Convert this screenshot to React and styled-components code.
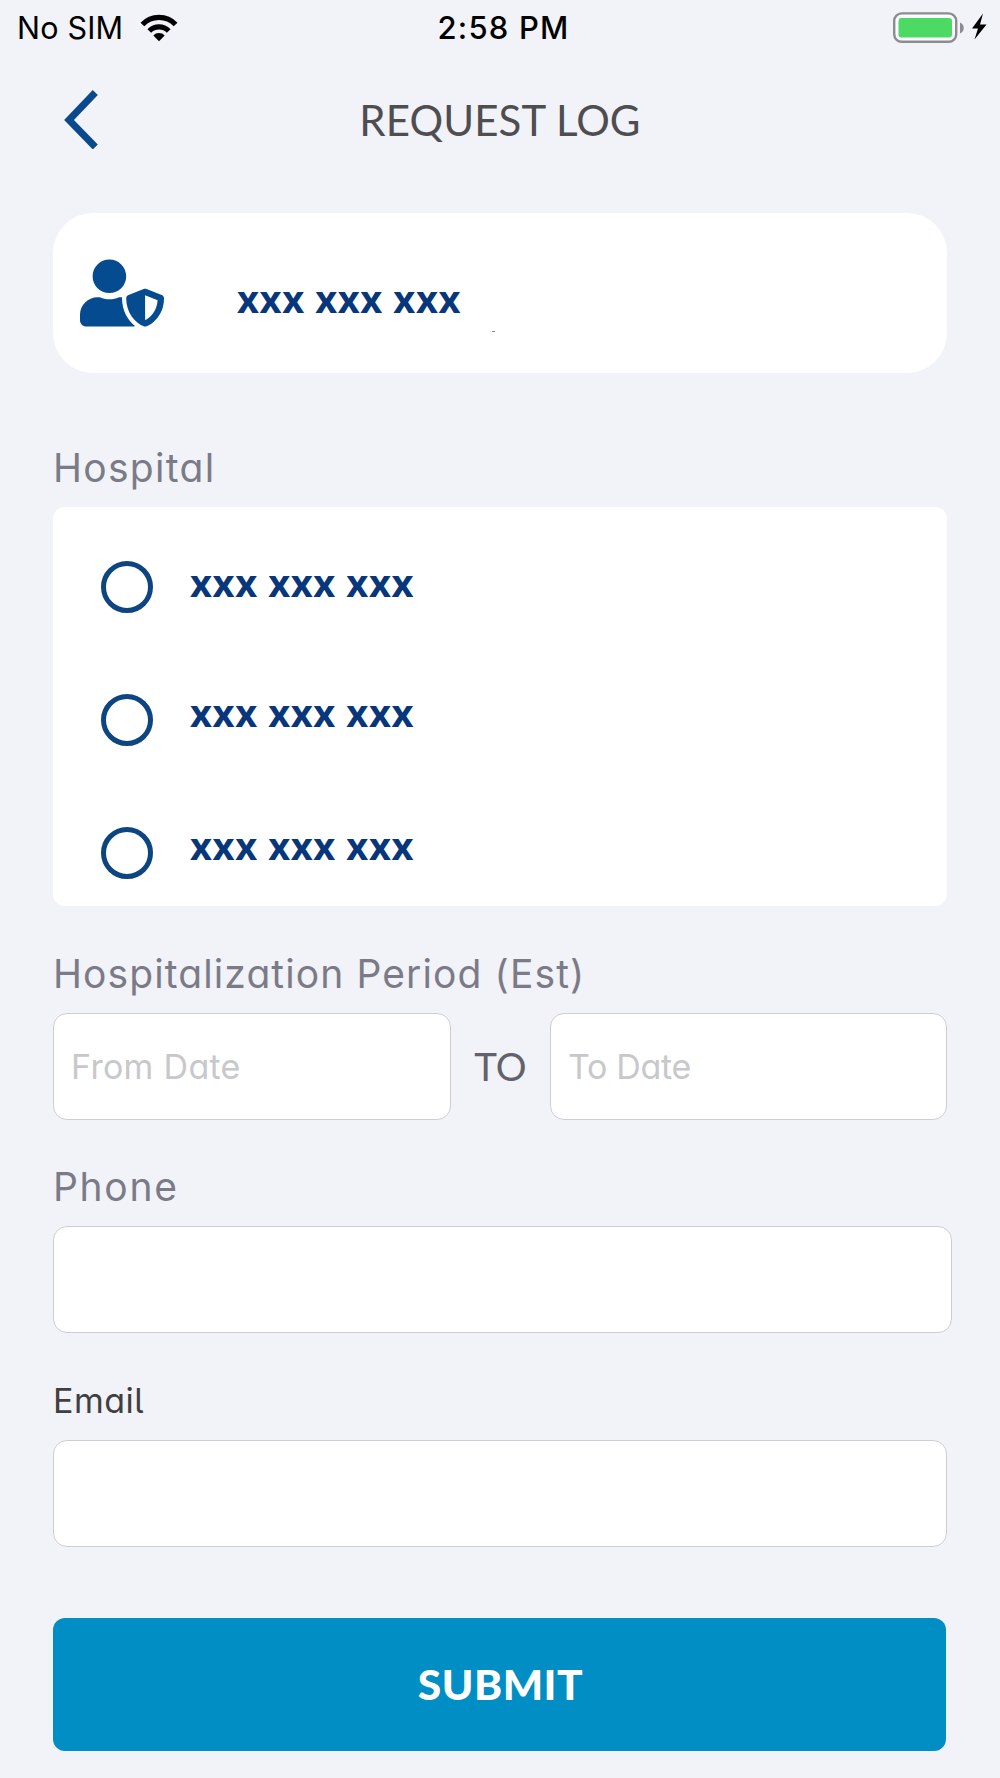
import styled, { createGlobalStyle } from "styled-components";
import { FaUserShield } from "react-icons/fa";

const GlobalStyle = createGlobalStyle`
  * {
    box-sizing: border-box;
  }
  body {
    margin: 0;
    background: #f2f3f8;
    font-family: "Inter", sans-serif;
  }
`;

const Screen = styled.div`
  width: 1000px;
  min-height: 1778px;
  display: flex;
  flex-direction: column;
  background: #f2f3f8;
`;

const StatusBar = styled.div`
  height: 55px;
  padding: 0 13px 0 17px;
  display: grid;
  grid-template-columns: 1fr auto 1fr;
  align-items: center;
  color: #000;
`;

const StatusSide = styled.div`
  display: flex;
  align-items: center;
  justify-content: ${(props) => (props.$end ? "flex-end" : "flex-start")};
`;

const Carrier = styled.span`
  width: 123px;
  font-size: 30.5px;
  letter-spacing: 0.2px;
  white-space: nowrap;
`;

const Clock = styled.span`
  font-size: 31px;
  font-weight: 500;
  letter-spacing: 1.2px;
  margin-left: 3px;
`;

const Header = styled.header`
  height: 130px;
  padding: 0 60px;
  display: grid;
  grid-template-columns: 60px 1fr 60px;
  align-items: center;
`;

const BackButton = styled.button`
  height: 64px;
  padding: 0 0 2px;
  border: none;
  background: none;
  display: flex;
  align-items: center;
`;

const Heading = styled.h1`
  margin: 0;
  padding-bottom: 1px;
  text-align: center;
  font-family: "Lato", sans-serif;
  font-size: 42px;
  font-weight: 400;
  letter-spacing: 0.1px;
  color: #4e4e51;
`;

const Content = styled.main`
  padding: 28px 53px 0;
  display: flex;
  flex-direction: column;
`;

const ProfileCard = styled.section`
  height: 160px;
  padding-left: 27px;
  display: flex;
  align-items: center;
  border-radius: 40px;
  background: #fff;
  color: #054b90;
`;

const ValueText = styled.span`
  font-family: "Open Sans", "Noto Sans", sans-serif;
  font-size: 38px;
  line-height: 52px;
  font-weight: 700;
  letter-spacing: 0.6px;
  color: #07367a;
`;

const ProfileName = styled(ValueText)`
  margin: 10px 0 0 73px;
`;

const Speck = styled.i`
  width: 3px;
  height: 1px;
  align-self: flex-end;
  margin: 0 0 41px 31px;
  background: #8b8b8b;
`;

const Group = styled.section`
  margin-top: ${(props) => props.$gap}px;
`;

const Label = styled.label`
  display: block;
  height: 48px;
  margin-bottom: 16px;
  padding-top: 1px;
  font-size: 39px;
  line-height: 48px;
  letter-spacing: ${(props) => props.$tracking}px;
  font-feature-settings: "cv11";
  color: #7b7b88;
`;

// tailed "l"
const SmallLabel = styled(Label)`
  font-size: 34px;
  font-feature-settings: "cv11", "cv05";
  color: #3f3f43;
`;

const OptionList = styled.div`
  height: 399px;
  padding: 53px 0 0 48px;
  display: flex;
  flex-direction: column;
  gap: 81px;
  border-radius: 12px;
  background: #fff;
`;

const Option = styled.div`
  height: 52px;
  display: flex;
  align-items: center;
  gap: 37px;
`;

const Radio = styled.span`
  width: 52px;
  height: 52px;
  margin-top: 1px;
  border: 5px solid #0c4580;
  border-radius: 50%;
`;

const OptionText = styled(ValueText)`
  margin-bottom: ${(props) => props.$lift}px;
`;

const DateRow = styled.div`
  display: flex;
  align-items: center;
`;

const Input = styled.input`
  display: block;
  width: ${(props) => props.$width}px;
  height: 107px;
  padding: 0 17px;
  border: 1.5px solid #cecdd3;
  border-radius: 14px;
  outline: none;
  background: #fff;
  font-family: "Inter", sans-serif;
  font-size: 34px;
  letter-spacing: ${(props) => props.$tracking || 0}px;
  font-feature-settings: "cv11";
  &::placeholder {
    color: #c8c8cb;
    opacity: 1;
  }
`;

const Between = styled.span`
  width: 99px;
  padding-bottom: 1px;
  text-align: center;
  font-family: "Lato", sans-serif;
  font-size: 38.5px;
  color: #62626d;
`;

const SubmitButton = styled.button`
  width: 893px;
  height: 133px;
  margin-top: 71px;
  padding: 0 0 2px 2px;
  border: none;
  border-radius: 12px;
  background: #008ec4;
  color: #fff;
  font-family: "Lato", sans-serif;
  font-size: 42.5px;
  font-weight: 900;
  letter-spacing: 0.5px;
`;

const hospitals = [
  { id: 1, name: "xxx xxx xxx", lift: 8 },
  { id: 2, name: "xxx xxx xxx", lift: 14 },
  { id: 3, name: "xxx xxx xxx", lift: 14 },
];

function WifiIcon() {
  return (
    <svg width="38" height="28" viewBox="0 0 38 28">
      <g fill="none" stroke="#000" strokeWidth="5.2">
        <path d="M2.4 10.5A22.8 22.8 0 0 1 35.6 10.5" />
        <path d="M9.3 17A13.6 13.6 0 0 1 28.7 17" />
      </g>
      <path d="M19 27.2L13.3 21.4A8 8 0 0 1 24.7 21.4Z" />
    </svg>
  );
}

function BatteryIcon() {
  return (
    <svg width="94" height="32" viewBox="0 0 94 32">
      <rect x="1.2" y="1.4" width="62" height="28.4" rx="7.5" fill="#fbfcfe" stroke="#8c8b91" strokeWidth="2.4" />
      <rect x="5.5" y="6" width="53.5" height="19.5" rx="3" fill="#4cd964" />
      <path d="M67 10.5C72 12.5 72 19.5 67 21.5Z" fill="#8c8b91" />
      <path d="M90 1.5L79 16.5H85L81.5 27.5L93.5 12.5H87Z" />
    </svg>
  );
}

function BackIcon() {
  return (
    <svg width="40" height="60" viewBox="0 0 40 60" fill="none" stroke="#0a4a8c" strokeWidth="7">
      <path d="M35.3 3.5L9 31L35.3 58" />
    </svg>
  );
}

export default function App() {
  return (
    <Screen>
      <GlobalStyle />
      <StatusBar>
        <StatusSide>
          <Carrier>No SIM</Carrier>
          <WifiIcon />
        </StatusSide>
        <Clock>2:58 PM</Clock>
        <StatusSide $end>
          <BatteryIcon />
        </StatusSide>
      </StatusBar>
      <Header>
        <BackButton aria-label="Back">
          <BackIcon />
        </BackButton>
        <Heading>REQUEST LOG</Heading>
      </Header>
      <Content>
        <ProfileCard>
          <FaUserShield size={84} />
          <ProfileName>xxx xxx xxx</ProfileName>
          <Speck />
        </ProfileCard>
        <Group $gap={70}>
          <Label $tracking={1.3}>Hospital</Label>
          <OptionList>
            {hospitals.map((hospital) => (
              <Option key={hospital.id}>
                <Radio />
                <OptionText $lift={hospital.lift}>{hospital.name}</OptionText>
              </Option>
            ))}
          </OptionList>
        </Group>
        <Group $gap={43}>
          <Label $tracking={1.1}>Hospitalization Period (Est)</Label>
          <DateRow>
            <Input $width={398} $tracking={0.3} placeholder="From Date" />
            <Between>TO</Between>
            <Input $width={397} $tracking={-0.3} placeholder="To Date" />
          </DateRow>
        </Group>
        <Group $gap={42}>
          <Label $tracking={1.7}>Phone</Label>
          <Input $width={899} />
        </Group>
        <Group $gap={43}>
          <SmallLabel $tracking={0.5}>Email</SmallLabel>
          <Input $width={894} />
        </Group>
        <SubmitButton>SUBMIT</SubmitButton>
      </Content>
    </Screen>
  );
}
